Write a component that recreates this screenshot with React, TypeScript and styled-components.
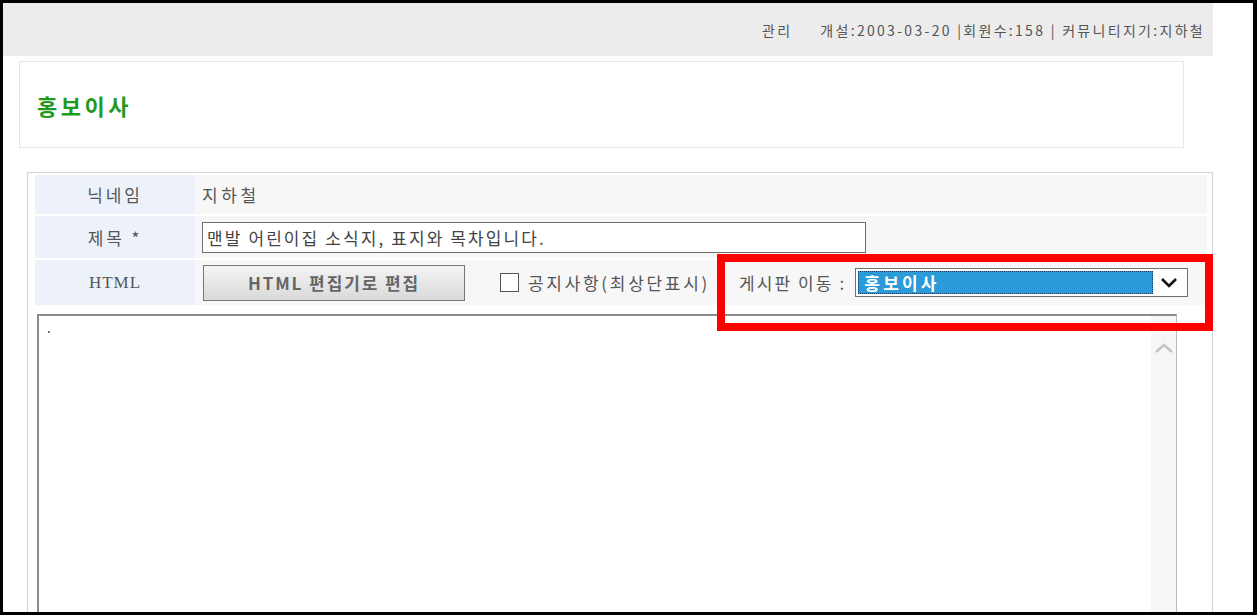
import styled, { createGlobalStyle } from "styled-components";

const GlobalStyle = createGlobalStyle`
  html, body {
    margin: 0;
    padding: 0;
    background: #fff;
  }
  body {
    font-family: "Noto Sans CJK KR", "Noto Sans", sans-serif;
    color: #555;
  }
`;

const Frame = styled.div`
  width: 1257px;
  height: 615px;
  box-sizing: border-box;
  border: 3px solid #000;
  border-right-width: 4px;
  background: #fff;
  overflow: hidden;
  position: relative;
`;

const TopBar = styled.div`
  width: 1210px;
  height: 53px;
  background: #ececec;
  display: flex;
  align-items: center;
  justify-content: flex-end;
  padding-right: 8px;
  box-sizing: border-box;
  font-size: 14px;
  letter-spacing: 2.3px;
  color: #555;
  gap: 28px;
  white-space: pre;
`;

const Content = styled.div`
  padding-left: 16px;
`;

const TitleBox = styled.div`
  margin-top: 5px;
  width: 1165px;
  height: 87px;
  box-sizing: border-box;
  border: 1px solid #e6e6e6;
  display: flex;
  align-items: center;
  padding-left: 17px;
`;

const Title = styled.h1`
  margin: 0;
  font-size: 22px;
  font-weight: 700;
  color: #1f9a1f;
  letter-spacing: 3.5px;
`;

const Panel = styled.div`
  margin-top: 24px;
  margin-left: 8px;
  width: 1186px;
  height: 460px;
  box-sizing: border-box;
  border: 1px solid #d4d4d4;
  border-bottom: none;
  padding: 2px 0 0 7px;
  background: #fff;
`;

const Rows = styled.div`
  display: grid;
  grid-template-columns: 160px 1fr;
  row-gap: 2px;
  margin-right: 5px;
`;

const Label = styled.div<{ $h: number; $serif?: boolean }>`
  height: ${(p) => p.$h}px;
  background: #edf2fa;
  display: flex;
  align-items: center;
  justify-content: center;
  font-size: 17px;
  letter-spacing: ${(p) => (p.$serif ? 1 : 2.9)}px;
  color: #555;
  font-family: ${(p) =>
    p.$serif ? `"Liberation Serif", serif` : `"Noto Sans CJK KR", sans-serif`};
`;

const Value = styled.div`
  background: #f7f7f7;
  display: flex;
  align-items: center;
  padding-left: 7px;
  font-size: 17px;
  letter-spacing: 3.6px;
  color: #555;
`;

const TextInput = styled.div`
  width: 664px;
  height: 31px;
  box-sizing: border-box;
  border: 1px solid #6f6f6f;
  background: #fff;
  display: flex;
  align-items: center;
  padding-left: 4px;
  font-size: 17px;
  letter-spacing: 2.1px;
  color: #444;
`;

const EditButton = styled.button`
  width: 262px;
  height: 36px;
  margin-left: 1px;
  border: 1px solid #777;
  background: linear-gradient(#f4f4f4, #d9d9d9);
  font-family: "Noto Sans CJK KR", sans-serif;
  font-size: 17px;
  letter-spacing: 1.9px;
  font-weight: 700;
  color: #666;
  padding: 0;
`;

const Notice = styled.label`
  margin-left: 35px;
  display: flex;
  align-items: center;
  gap: 9px;
  font-size: 17px;
  letter-spacing: 2.7px;
  color: #555;
  white-space: nowrap;
`;

const Box = styled.span`
  width: 19px;
  height: 19px;
  box-sizing: border-box;
  border: 1px solid #555;
  background: #fff;
`;

const Move = styled.div`
  margin-left: 29px;
  display: flex;
  align-items: center;
  gap: 9px;
  font-size: 17px;
  letter-spacing: 2.1px;
  color: #555;
  white-space: nowrap;
`;

const Select = styled.div`
  width: 333px;
  height: 29px;
  box-sizing: border-box;
  border: 1px solid #707070;
  background: #fff;
  display: flex;
  align-items: center;
  padding: 2px;
`;

const Selected = styled.div`
  flex: 1;
  height: 100%;
  background: #2a9bd8;
  color: #fff;
  font-weight: 700;
  font-size: 17px;
  letter-spacing: 3.2px;
  display: flex;
  align-items: center;
  padding-left: 5px;
  border: 1px dotted #103a66;
  box-sizing: border-box;
`;

const Arrow = styled.div`
  width: 32px;
  display: flex;
  justify-content: center;
`;

const Editor = styled.div`
  margin-top: 9px;
  margin-left: 2px;
  width: 1140px;
  height: 320px;
  box-sizing: border-box;
  border: 2px solid #8a8a8a;
  border-right: 1px solid #bbb;
  border-bottom: none;
  background: #fff;
  display: flex;
`;

const EditorText = styled.div`
  flex: 1;
  padding: 8px 0 0 6px;
  font-size: 14px;
  line-height: 14px;
  color: #555;
`;

const ScrollBar = styled.div`
  width: 25px;
  background: #f6f6f6;
  display: flex;
  justify-content: center;
  padding-top: 26px;
`;

const Highlight = styled.div`
  position: absolute;
  left: 714px;
  top: 251px;
  width: 496px;
  height: 77px;
  box-sizing: border-box;
  border: 8px solid #ff0000;
  pointer-events: none;
`;

export default function App() {
  return (
    <Frame>
      <GlobalStyle />
      <TopBar>
        <span>관리</span>
        <span>개설:2003-03-20 |회원수:158 | 커뮤니티지기:지하철</span>
      </TopBar>
      <Content>
        <TitleBox>
          <Title>홍보이사</Title>
        </TitleBox>
        <Panel>
          <Rows>
            <Label $h={39}>닉네임</Label>
            <Value>지하철</Value>
            <Label $h={42}>제목 *</Label>
            <Value>
              <TextInput>맨발 어린이집 소식지, 표지와 목차입니다.</TextInput>
            </Value>
            <Label $h={45} $serif>
              HTML
            </Label>
            <Value>
              <EditButton>HTML 편집기로 편집</EditButton>
              <Notice>
                <Box />
                공지사항(최상단표시)
              </Notice>
              <Move>
                게시판 이동 :
                <Select>
                  <Selected>홍보이사</Selected>
                  <Arrow>
                    <svg width="18" height="12" viewBox="0 0 18 12">
                      <path d="M2 2 L9 9 L16 2" fill="none" stroke="#111" strokeWidth="2.6" />
                    </svg>
                  </Arrow>
                </Select>
              </Move>
            </Value>
          </Rows>
          <Editor>
            <EditorText>·</EditorText>
            <ScrollBar>
              <svg width="20" height="12" viewBox="0 0 20 12">
                <path d="M2 10 L10 3 L18 10" fill="none" stroke="#c4c4c4" strokeWidth="2.5" />
              </svg>
            </ScrollBar>
          </Editor>
        </Panel>
      </Content>
      <Highlight />
    </Frame>
  );
}
